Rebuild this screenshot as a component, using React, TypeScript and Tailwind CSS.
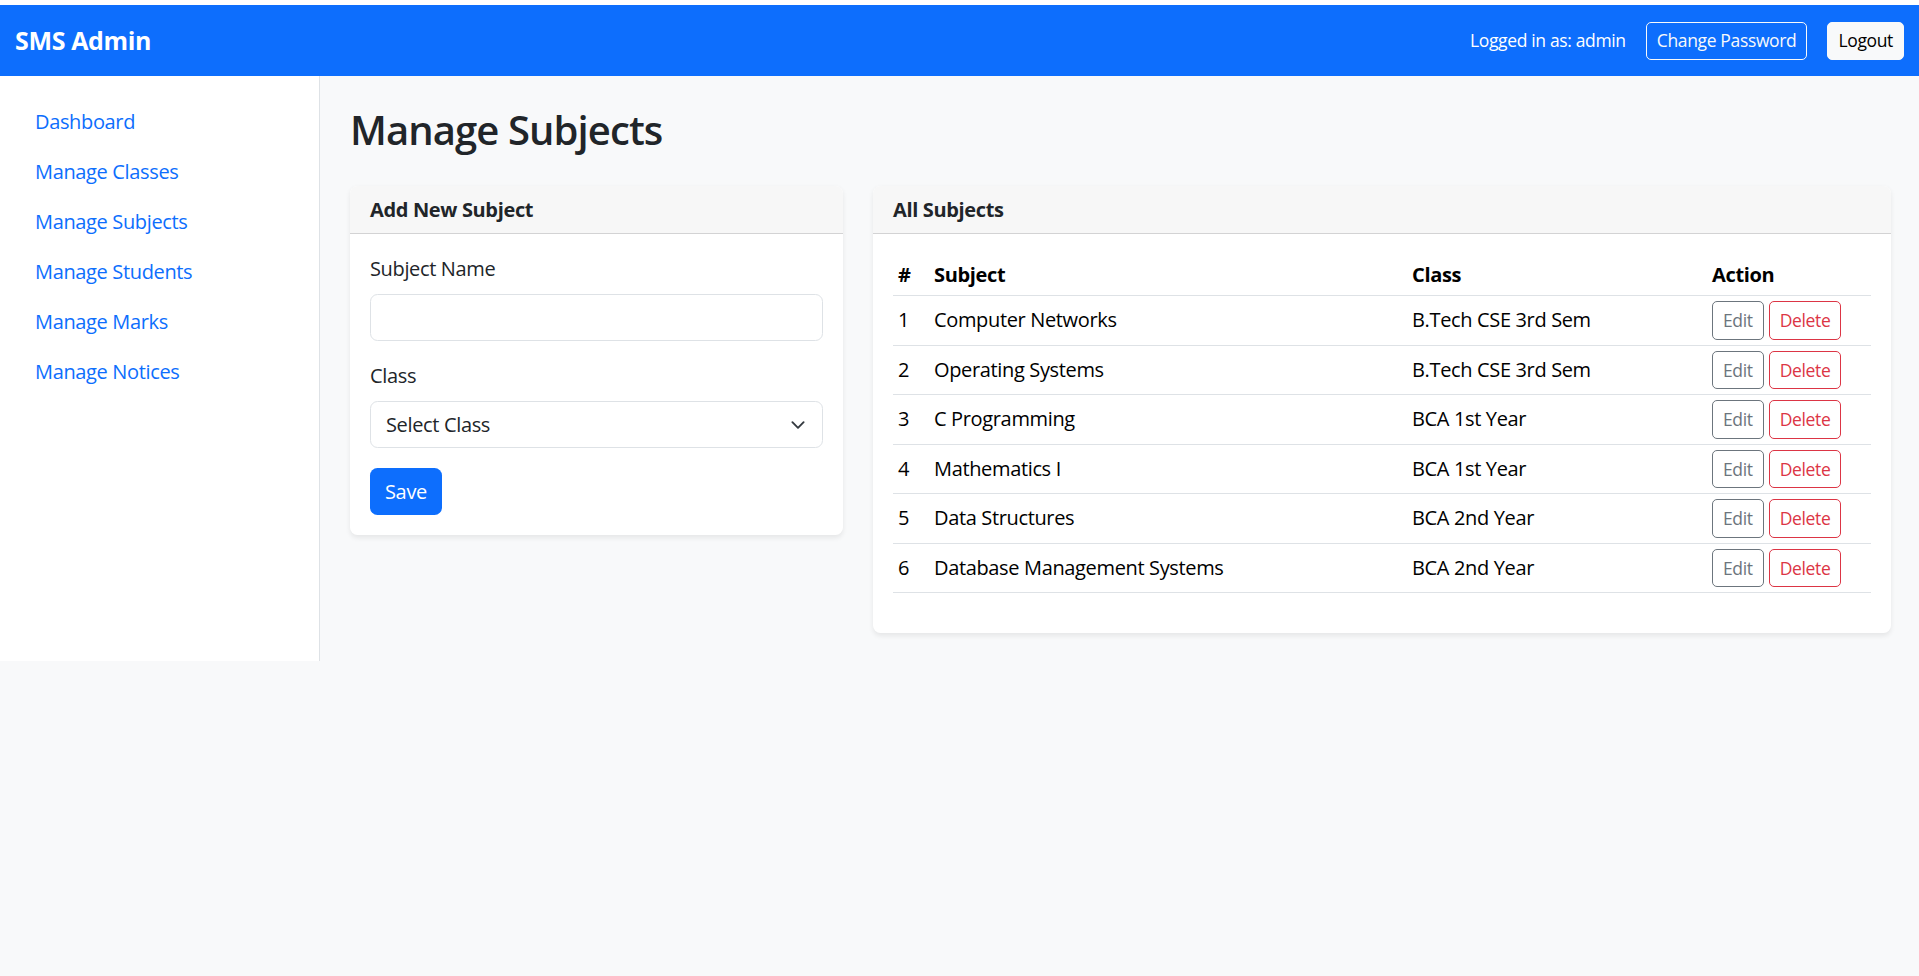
import React from "react";

const links = ["Dashboard", "Manage Classes", "Manage Subjects", "Manage Students", "Manage Marks", "Manage Notices"];

const subjects = [
  { id: 1, name: "Computer Networks", cls: "B.Tech CSE 3rd Sem" },
  { id: 2, name: "Operating Systems", cls: "B.Tech CSE 3rd Sem" },
  { id: 3, name: "C Programming", cls: "BCA 1st Year" },
  { id: 4, name: "Mathematics I", cls: "BCA 1st Year" },
  { id: 5, name: "Data Structures", cls: "BCA 2nd Year" },
  { id: 6, name: "Database Management Systems", cls: "BCA 2nd Year" },
];

function Card({ title, children }: { title: string; children: React.ReactNode }) {
  return (
    <section className="bg-white rounded-[7.5px] shadow-[0_2.5px_5px_rgba(0,0,0,0.075)] overflow-hidden">
      <div className="bg-[#f7f7f7] border-b border-[#d3d3d4] px-[20px] py-[9px] leading-[29px] font-bold text-[#212529]">
        {title}
      </div>
      <div className="p-[20px]">{children}</div>
    </section>
  );
}

export default function App() {
  return (
    <div className="min-h-screen bg-[#f8f9fa] text-[#212529] text-[20px] leading-[1.5] tracking-[-0.35px] font-['Open_Sans',sans-serif]">
      <div className="h-[5px] bg-white" />
      <nav className="h-[71px] bg-[#0d6efd] flex items-center justify-between px-[15px]">
        <span className="text-white text-[25px] font-bold">SMS Admin</span>
        <div className="flex items-center">
          <span className="text-white text-[17.5px] mr-[20px]">Logged in as: admin</span>
          <button className="h-[38px] px-[10px] border border-[#f8f9fa] text-[#f8f9fa] rounded-[5px] text-[17.5px] mr-[20px]">
            Change Password
          </button>
          <button className="h-[38px] px-[10px] border border-[#f8f9fa] bg-[#f8f9fa] text-black rounded-[5px] text-[17.5px]">
            Logout
          </button>
        </div>
      </nav>

      <div className="flex items-start">
        <aside className="w-[320px] h-[585px] shrink-0 bg-white border-r border-[#dee2e6] pt-[21px] pb-[20px] px-[15px]">
          {links.map((l) => (
            <a key={l} href="#" className="block px-[20px] py-[10px] leading-[30px] text-[#0d6efd]">
              {l}
            </a>
          ))}
        </aside>

        <main className="flex-1 p-[30px] pr-[28px]">
          <h2 className="text-[40px] font-semibold leading-[1.2] tracking-[-0.9px] mb-[32px]">Manage Subjects</h2>

          <div className="flex gap-[30px] items-start">
            <div className="w-[493px] shrink-0">
              <Card title="Add New Subject">
                <div className="mb-[20px]">
                  <label className="block mb-[10px] leading-[30px]">Subject Name</label>
                  <input className="w-full h-[47px] border border-[#dee2e6] rounded-[7.5px] px-[15px] bg-white outline-none" />
                </div>
                <div className="mb-[20px]">
                  <label className="block mb-[10px] leading-[30px]">Class</label>
                  <div className="relative">
                    <select className="w-full h-[47px] appearance-none border border-[#dee2e6] rounded-[7.5px] pl-[15px] pr-[50px] bg-white text-[#212529] outline-none">
                      <option>Select Class</option>
                    </select>
                    <svg
                      className="absolute right-[15px] top-1/2 -translate-y-1/2 pointer-events-none"
                      width="20"
                      height="15"
                      viewBox="0 0 16 16"
                    >
                      <path fill="none" stroke="#343a40" strokeLinecap="round" strokeLinejoin="round" strokeWidth="2" d="m2 5 6 6 6-6" />
                    </svg>
                  </div>
                </div>
                <button className="h-[47px] px-[15px] bg-[#0d6efd] text-white rounded-[7.5px]">Save</button>
              </Card>
            </div>

            <div className="flex-1">
              <Card title="All Subjects">
                <table className="w-full table-fixed border-collapse text-black mb-[20px]">
                  <colgroup>
                    <col className="w-[36px]" />
                    <col className="w-[478px]" />
                    <col className="w-[300px]" />
                    <col />
                  </colgroup>
                  <thead>
                    <tr className="border-b border-[#dee2e6]">
                      <th className="px-[5px] pt-[6px] pb-[5px] text-left font-bold">#</th>
                      <th className="px-[5px] pt-[6px] pb-[5px] text-left font-bold">Subject</th>
                      <th className="px-[5px] pt-[6px] pb-[5px] text-left font-bold">Class</th>
                      <th className="px-[5px] pt-[6px] pb-[5px] text-left font-bold">Action</th>
                    </tr>
                  </thead>
                  <tbody>
                    {subjects.map((s) => (
                      <tr key={s.id} className="border-b border-[#dee2e6]">
                        <td className="p-[5px] align-middle">{s.id}</td>
                        <td className="p-[5px] align-middle">{s.name}</td>
                        <td className="p-[5px] align-middle">{s.cls}</td>
                        <td className="p-[5px] align-middle whitespace-nowrap">
                          <button className="h-[38.5px] px-[10px] border border-[#6c757d] text-[#6c757d] rounded-[5px] text-[17.5px] mr-[5px]">
                            Edit
                          </button>
                          <button className="h-[38.5px] px-[10px] border border-[#dc3545] text-[#dc3545] rounded-[5px] text-[17.5px]">
                            Delete
                          </button>
                        </td>
                      </tr>
                    ))}
                  </tbody>
                </table>
              </Card>
            </div>
          </div>
        </main>
      </div>
    </div>
  );
}
